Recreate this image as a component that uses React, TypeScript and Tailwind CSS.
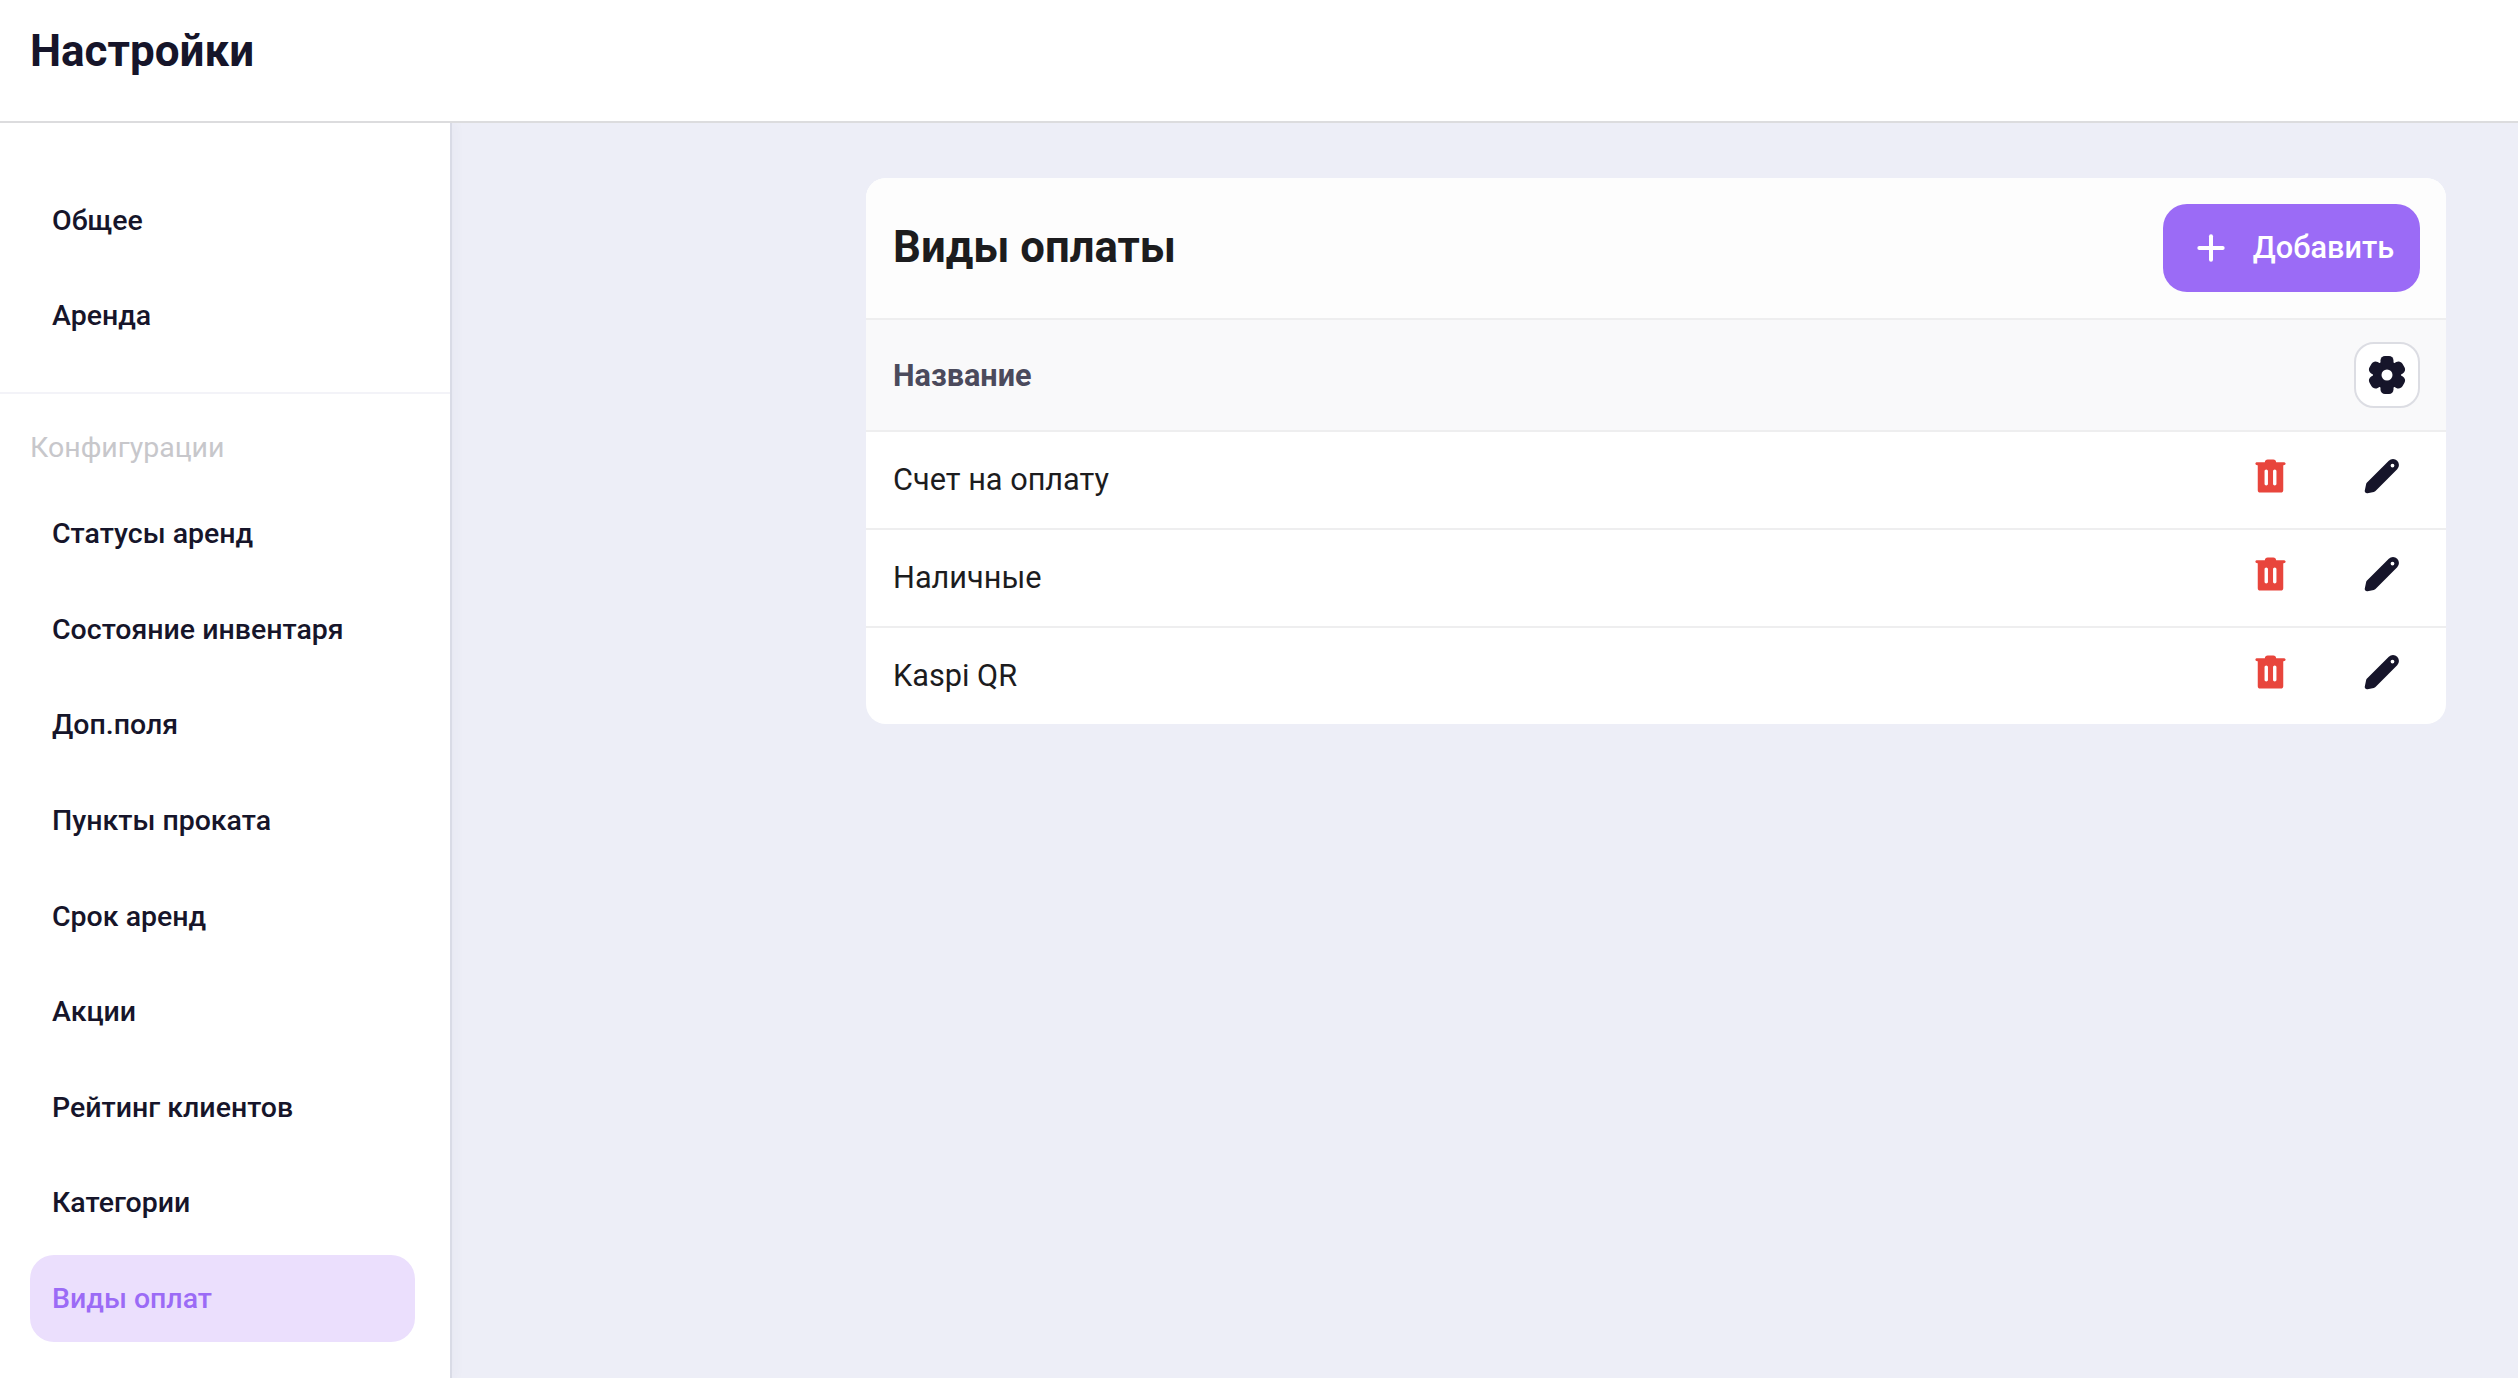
import { Plus } from "lucide-react";

const topItems = ["Общее", "Аренда"];
const configItems = [
  "Статусы аренд",
  "Состояние инвентаря",
  "Доп.поля",
  "Пункты проката",
  "Срок аренд",
  "Акции",
  "Рейтинг клиентов",
  "Категории",
  "Виды оплат",
];
const payments = ["Счет на оплату", "Наличные", "Kaspi QR"];

function TrashIcon() {
  return (
    <svg viewBox="0 0 32 36" className="h-[34px] w-[31px] fill-[#e8453c]">
      <path
        fillRule="evenodd"
        d="M10 3.500C10 1.800 11.300.5 13 .5h6c1.700 0 3 1.300 3 3h8c1 0 2 .6 2 1.500S31 6.500 30 6.500h-.5V33c0 1.500-1 2.500-2.500 2.500H5c-1.500 0-2.500-1-2.500-2.500V6.500H2C1 6.500 0 6 0 5s1-1.500 2-1.500h8ZM11.500 11c-1 0-1.800.8-1.800 1.700v13.600c0 1 .8 1.700 1.800 1.700s1.800-.7 1.800-1.700V12.700c0-.9-.8-1.700-1.800-1.700Zm9 0c-1 0-1.800.8-1.800 1.700v13.600c0 1 .8 1.700 1.800 1.700s1.800-.7 1.800-1.700V12.700c0-.9-.8-1.700-1.800-1.700Z"
      />
    </svg>
  );
}

function PencilIcon() {
  return (
    <svg viewBox="0 0 36 36" className="h-[36px] w-[36px] fill-[#16152a]">
      <path
        fillRule="evenodd"
        d="M24.800 2.800a5.900 5.900 0 0 1 8.400 8.400L11.500 33c-.5.5-1 .8-1.700.9l-6.300 1.300c-1.700.3-3-1-2.700-2.700l1.300-6.300c.1-.7.4-1.200.9-1.700L24.800 2.800Zm3.700 2.900a1.900 1.900 0 1 0 0 3.800 1.900 1.900 0 0 0 0-3.800Z"
      />
    </svg>
  );
}

function GearIcon() {
  return (
    <svg viewBox="0 0 38 38" className="h-[38px] w-[38px]">
      <g className="fill-[#16152a]">
        <circle cx="19" cy="19" r="14" />
        <rect x="12.500" y="0" width="13" height="12" rx="4.500" />
        <rect x="12.500" y="0" width="13" height="12" rx="4.500" transform="rotate(60 19 19)" />
        <rect x="12.500" y="0" width="13" height="12" rx="4.500" transform="rotate(120 19 19)" />
        <rect x="12.500" y="0" width="13" height="12" rx="4.500" transform="rotate(180 19 19)" />
        <rect x="12.500" y="0" width="13" height="12" rx="4.500" transform="rotate(240 19 19)" />
        <rect x="12.500" y="0" width="13" height="12" rx="4.500" transform="rotate(300 19 19)" />
      </g>
      <circle cx="19" cy="19" r="5.500" className="fill-white" />
    </svg>
  );
}

function NavItem({ label, active }: { label: string; active?: boolean }) {
  return (
    <div
      className={`flex h-[87px] items-center rounded-[24px] px-[22px] pt-[1px] text-[28.500px] font-medium ${
        active ? "bg-[#ebdffd] text-[#9b6bf6]" : "text-[#16152a]"
      }`}
    >
      {label}
    </div>
  );
}

export default function App() {
  return (
    <div className="flex h-[1378px] w-full flex-col overflow-hidden bg-[#edeef7] font-['Roboto',sans-serif] antialiased">
      <header className="relative z-10 flex h-[123px] shrink-0 items-start border-b-[2px] border-[#dcdcde] bg-white px-[30px] pt-[24px]">
        <h1 className="text-[44px] font-bold leading-[54px] text-[#16152a]">Настройки</h1>
      </header>
      <div className="flex min-h-0 flex-1">
        <aside className="flex w-[452px] shrink-0 flex-col border-r-[2px] border-[#d9dbe6] bg-white shadow-[4px_0_10px_rgba(60,60,110,0.03)]">
          <div className="flex flex-col gap-[8.600px] pt-[54px] pr-[35px] pb-[32px] pl-[30px]">
            {topItems.map((item) => (
              <NavItem key={item} label={item} />
            ))}
          </div>
          <div className="border-t-[2px] border-[#f3f3f8] pt-[32px] pr-[35px] pl-[30px]">
            <div className="mb-[21px] text-[28.500px] leading-[44px] text-[#c7c7cb]">Конфигурации</div>
            <div className="flex flex-col gap-[8.600px]">
              {configItems.map((item) => (
                <NavItem key={item} label={item} active={item === "Виды оплат"} />
              ))}
            </div>
          </div>
        </aside>
        <main className="min-w-0 flex-1 pt-[55px] pr-[72px] pl-[414px]">
          <section className="overflow-hidden rounded-[20px] bg-white">
            <div className="flex h-[142px] items-center justify-between border-b-[2px] border-[#eeeeef] bg-[#fdfdfd] pr-[26px] pl-[27px]">
              <h2 className="text-[43.700px] font-bold text-[#1c1c1e]">Виды оплаты</h2>
              <button className="flex h-[88px] w-[257px] items-center justify-center gap-[22px] rounded-[24px] bg-[#9b6bf6] pl-[2px] text-[30.700px] font-medium text-white">
                <Plus className="h-[40px] w-[40px]" strokeWidth={2.4} />
                Добавить
              </button>
            </div>
            <div className="flex h-[112px] items-center justify-between border-b-[2px] border-[#eeeeef] bg-[#f9f9fa] pr-[26px] pl-[27px]">
              <span className="pt-[2px] text-[30.600px] font-bold text-[#4b4a5c]">Название</span>
              <button className="flex h-[66px] w-[66px] items-center justify-center rounded-[20px] border-[2px] border-[#dcdde3] bg-white">
                <GearIcon />
              </button>
            </div>
            {payments.map((name, i) => (
              <div
                key={name}
                className={`flex items-center justify-between pr-[46px] pl-[27px] ${
                  i < payments.length - 1 ? "h-[98px] border-b-[2px] border-[#eeeeef]" : "h-[96px]"
                }`}
              >
                <span className="text-[30.700px] text-[#1c1c1e]">{name}</span>
                <div className="flex items-center gap-[78px] pb-[8px]">
                  <TrashIcon />
                  <PencilIcon />
                </div>
              </div>
            ))}
          </section>
        </main>
      </div>
    </div>
  );
}
